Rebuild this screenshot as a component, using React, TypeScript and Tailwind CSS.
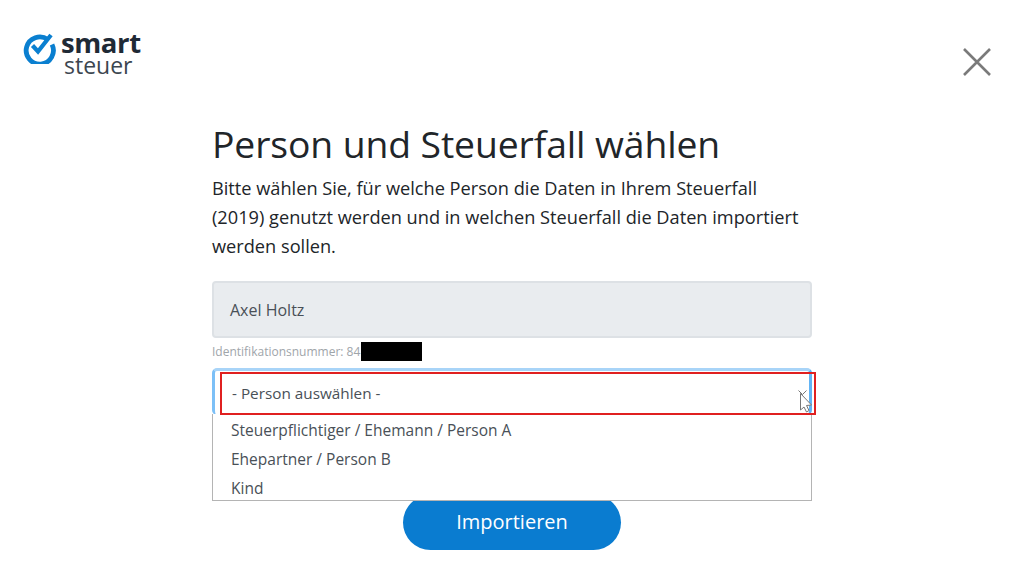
import React from "react";

const FONT = { fontFamily: '"Open Sans", "Noto Sans", sans-serif' };

const OPTIONS = ["Steuerpflichtiger / Ehemann / Person A", "Ehepartner / Person B", "Kind"];

function Logo() {
  return (
    <div className="flex items-start">
      <svg width="34" height="34" viewBox="0 0 34 34" fill="none" className="mt-[-2px] ml-[-1px]">
        <path d="M25.8 9.5 A13.6 13.6 0 1 0 30 14.5" stroke="#0a7fd0" strokeWidth="4.8" />
        <path d="M10.5 15.5 L16 21.5 L29 5" stroke="#0a7fd0" strokeWidth="4.2" fill="none" />
      </svg>
      <div className="ml-[5px] mt-[-1px] flex flex-col">
        <span className="h-[26px] text-[27.5px] leading-[23px] font-bold text-[#1f2a36] tracking-[-0.4px]">smart</span>
        <span className="ml-[3px] h-[19px] text-[23px] leading-[17px] text-[#3c4650]">steuer</span>
      </div>
    </div>
  );
}

export default function App() {
  return (
    <div style={FONT} className="relative h-[565px] w-[1024px] overflow-hidden bg-white text-[#212529]">
      <header className="flex h-[123px] items-start justify-between pl-[23px] pr-[32px] pt-[32px]">
        <Logo />
        <svg width="30" height="30" viewBox="0 0 30 30" className="mt-[15px]">
          <path d="M2 2 L28 28 M28 2 L2 28" stroke="#7a7a7a" strokeWidth="2.6" fill="none" />
        </svg>
      </header>

      <main className="ml-[212px] w-[600px]">
        <h1 className="text-[37.3px] leading-[42px] font-normal tracking-[-0.1px]">Person und Steuerfall wählen</h1>
        <p className="mt-[9px] w-[595px] text-[18.2px] leading-[29px]">
          Bitte wählen Sie, für welche Person die Daten in Ihrem Steuerfall (2019) genutzt werden und in welchen Steuerfall die Daten importiert werden sollen.
        </p>

        <div className="mt-[20px] flex h-[57px] items-center rounded-[4px] border-2 border-[#dde1e5] bg-[#e9ecef] pl-[16px] text-[16px] text-[#495057]">
          Axel Holtz
        </div>
        <div className="mt-[4px] flex h-[19px] items-center text-[12px] text-[#a0a5aa]">
          Identifikationsnummer: 84
          <span className="ml-[1px] block h-[19px] w-[61px] bg-black" />
        </div>

        <div className="relative mt-[7px]">
          <div className="flex h-[47px] items-center rounded-[5px] border-[3px] border-b-0 border-[#a8d4f8] border-r-[#62b4f5] border-l-[#7cc0f7] bg-white pl-[17px] text-[15.3px] text-[#495057]">
            - Person auswählen -
          </div>
          <div className="absolute left-0 top-[46px] z-10 h-[87px] w-[600px] overflow-hidden border border-t-0 border-[#b4b4b4] bg-white pl-[18px] pt-[2px] text-[15.5px] text-[#495057]">
            {OPTIONS.map((o) => (
              <div key={o} className="h-[29px] leading-[29px]">{o}</div>
            ))}
          </div>
          {/* annotation box from the screenshot */}
          <div className="absolute left-[8px] top-[4px] z-20 h-[43px] w-[596px] border-2 border-[#e02020]" />
          <svg width="14" height="26" viewBox="0 0 14 26" className="absolute left-[586px] top-[20px] z-30">
            <path d="M0.5 2.5 L4.5 6.5 L8.5 2.5" stroke="#777" strokeWidth="1" fill="none" />
            <path d="M2.5 5.5 L2.5 22 L6 19 L8.5 24 L11 22.5 L8.5 17.5 L13.5 17 Z" stroke="#777" strokeWidth="1" fill="#fff" />
          </svg>
        </div>

        <div className="mt-[80px] flex justify-center">
          <button className="h-[55px] w-[218px] rounded-full bg-[#0a7cd0] pb-[2px] text-[20px] text-white">
            Importieren
          </button>
        </div>
      </main>
    </div>
  );
}
